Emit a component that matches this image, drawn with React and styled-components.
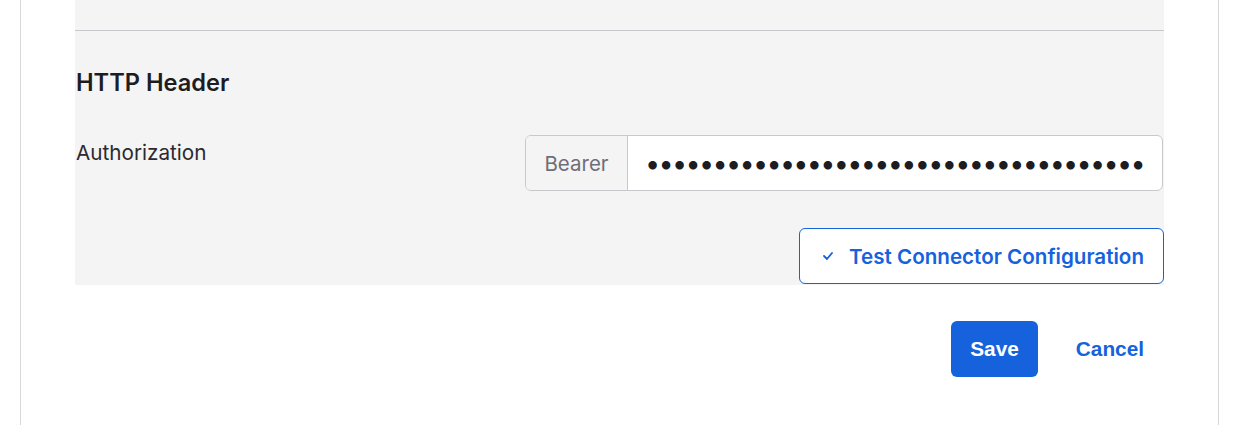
import React from 'react';
import styled, { createGlobalStyle } from 'styled-components';

const GlobalStyle = createGlobalStyle`
  html, body {
    margin: 0;
    padding: 0;
    background: #ffffff;
    font-family: Inter, "Noto Sans", sans-serif;
    color: #1d1d21;
  }
`;

const Card = styled.div`
  margin-left: 20px;
  width: 1199px;
  box-sizing: border-box;
  min-height: 425px;
  border-left: 1px solid #d7d7dc;
  border-right: 1px solid #d7d7dc;
  padding: 0 54px;
`;

const Panel = styled.section`
  background: #f4f4f4;
  padding-bottom: 1px;
`;

const PanelTop = styled.div`
  height: 30px;
  border-bottom: 1px solid #c8c8cc;
`;

const Heading = styled.h3`
  margin: 37px 0 0 1px;
  font-size: 23.6px;
  line-height: 30px;
  font-weight: 600;
  color: #1d1d21;
`;

const FieldRow = styled.div`
  display: grid;
  grid-template-columns: 450px 1fr;
  margin-top: 37px;
`;

const Label = styled.label`
  font-size: 20.7px;
  line-height: 26px;
  padding: 5px 0 0 1px;
  color: #2a2a30;
`;

const InputGroup = styled.div`
  display: flex;
  height: 56px;
  box-sizing: border-box;
  margin-right: 1px;
  border: 1px solid #c8c8cc;
  border-radius: 6px;
  overflow: hidden;
  background: #ffffff;
`;

const Addon = styled.span`
  display: flex;
  align-items: center;
  justify-content: center;
  width: 101px;
  flex: none;
  background: #f4f4f4;
  border-right: 1px solid #c8c8cc;
  font-size: 20.5px;
  color: #6e6e78;
`;

const Secret = styled.input`
  flex: 1;
  min-width: 0;
  border: none;
  outline: none;
  padding: 0 18px 0 17px;
  font-family: Inter, sans-serif;
  font-size: 27px;
  letter-spacing: -1.7px;
  color: #1d1d21;
  background: transparent;
`;

const ActionRow = styled.div`
  display: flex;
  justify-content: flex-end;
  margin-top: 37px;
`;

const OutlineButton = styled.button`
  display: flex;
  align-items: center;
  gap: 16px;
  height: 56px;
  box-sizing: border-box;
  padding: 0 19px 0 23px;
  border: 1px solid #1662dd;
  border-radius: 6px;
  background: #ffffff;
  color: #1662dd;
  font-family: Inter, sans-serif;
  font-size: 20.6px;
  font-weight: 600;
  cursor: pointer;
`;

const Footer = styled.div`
  display: flex;
  justify-content: flex-end;
  align-items: center;
  gap: 18px;
  margin-top: 36px;
`;

const FooterButton = styled.button`
  height: 56px;
  box-sizing: border-box;
  padding: 0 ${p => (p.primary ? '19px' : '20px')};
  border: none;
  border-radius: 6px;
  background: ${p => (p.primary ? '#1662dd' : 'transparent')};
  color: ${p => (p.primary ? '#ffffff' : '#1662dd')};
  font-family: "Liberation Sans", Arial, sans-serif;
  font-size: 20.8px;
  font-weight: 700;
  cursor: pointer;
`;

const CheckIcon = () => (
  <svg width="10" height="8" viewBox="0 0 10 8" fill="none">
    <polyline points="1,4 4,7 9,1" stroke="#1662dd" strokeWidth="1.8" strokeLinecap="round" strokeLinejoin="round" />
  </svg>
);

export default function App() {
  return (
    <>
      <GlobalStyle />
      <Card>
        <Panel>
          <PanelTop />
          <Heading>HTTP Header</Heading>
          <FieldRow>
            <Label>Authorization</Label>
            <InputGroup>
              <Addon>Bearer</Addon>
              <Secret type="password" readOnly value={'x'.repeat(60)} />
            </InputGroup>
          </FieldRow>
          <ActionRow>
            <OutlineButton>
              <CheckIcon />
              Test Connector Configuration
            </OutlineButton>
          </ActionRow>
        </Panel>
        <Footer>
          <FooterButton primary>Save</FooterButton>
          <FooterButton>Cancel</FooterButton>
        </Footer>
      </Card>
    </>
  );
}
